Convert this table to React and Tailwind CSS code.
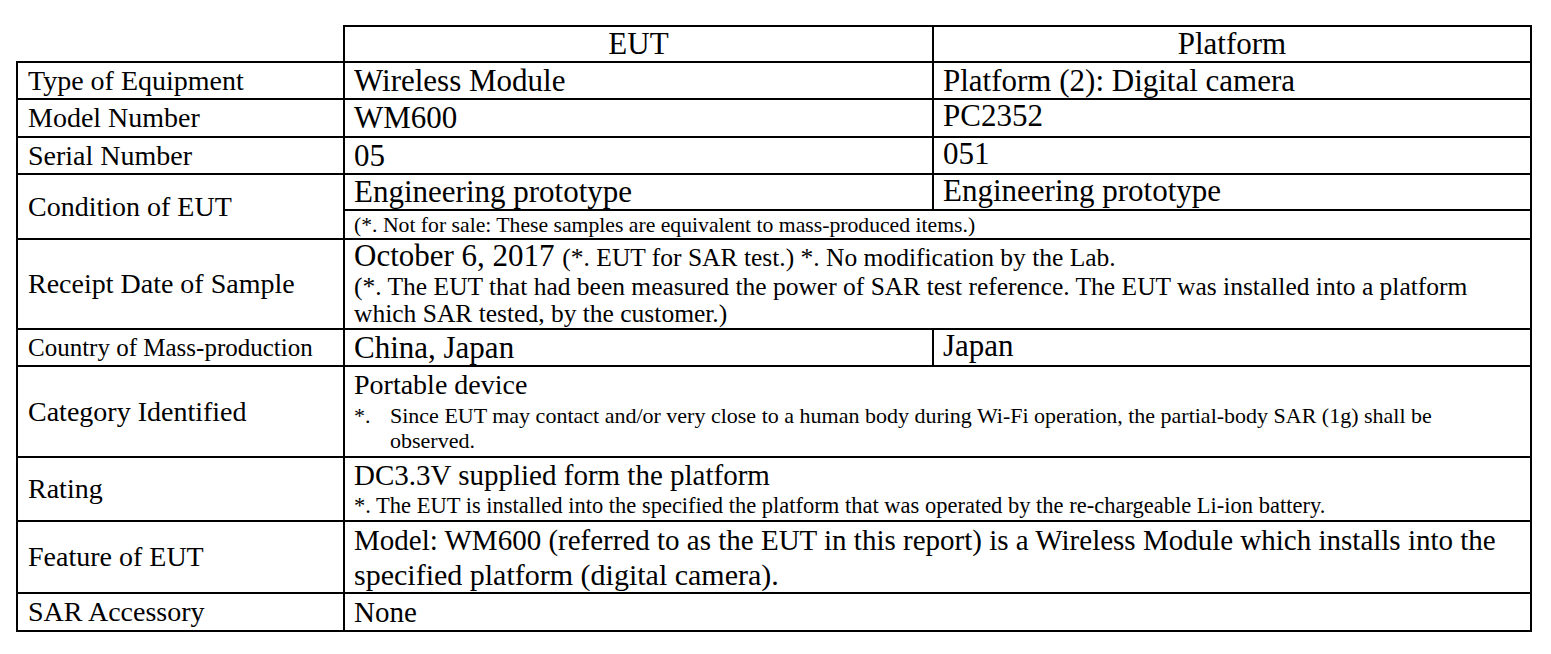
import React from 'react';

const label = 'border-2 border-black pl-[10px] pr-1 align-middle leading-[30px] whitespace-nowrap';
const val = 'border-2 border-black pl-[9px] pr-1 text-[31px] leading-[32px] whitespace-nowrap';
const top = 'border-2 border-black pl-[9px] pr-1 align-top';

const Note = ({ children }) => (
  <div className="flex text-[22px] leading-[25px] whitespace-nowrap">
    <span className="w-[36px] shrink-0">*.</span>
    <span>{children}</span>
  </div>
);

const App = () => {
  return (
    <div className="min-h-screen bg-white text-black font-['Liberation_Serif','Times_New_Roman',serif]">
      <table className="table-fixed border-collapse ml-[16px] mt-[25px] w-[1514px]">
        <colgroup>
          <col className="w-[327px]" />
          <col className="w-[589px]" />
          <col className="w-[598px]" />
        </colgroup>
        <tbody>
          <tr>
            <td className="border-0 h-[36px]"></td>
            <td className="border-2 border-black text-center align-middle text-[31px] leading-[32px]">EUT</td>
            <td className="border-2 border-black text-center align-middle text-[31px] leading-[32px]">Platform</td>
          </tr>
          <tr>
            <td className={`${label} text-[28px] h-[37px]`}>Type of Equipment</td>
            <td className={`${val} align-middle`}>Wireless Module</td>
            <td className={`${val} align-middle`}>Platform (2): Digital camera</td>
          </tr>
          <tr>
            <td className={`${label} text-[28px] h-[38px]`}>Model Number</td>
            <td className={`${val} align-middle`}>WM600</td>
            <td className={`${val} align-top`}>PC2352</td>
          </tr>
          <tr>
            <td className={`${label} text-[28px] h-[37px]`}>Serial Number</td>
            <td className={`${val} align-middle`}>05</td>
            <td className={`${val} align-top`}>051</td>
          </tr>
          <tr>
            <td rowSpan={2} className={`${label} text-[28px]`}>Condition of EUT</td>
            <td className={`${val} align-middle h-[36px]`}>Engineering prototype</td>
            <td className={`${val} align-top`}>Engineering prototype</td>
          </tr>
          <tr>
            <td colSpan={2} className="border-2 border-black pl-[9px] h-[29px] align-middle text-[21.7px] leading-[24px] whitespace-nowrap">
              (*. Not for sale: These samples are equivalent to mass-produced items.)
            </td>
          </tr>
          <tr>
            <td className={`${label} text-[28px] h-[90px]`}>Receipt Date of Sample</td>
            <td colSpan={2} className={`${top} pt-[1px]`}>
              <div className="text-[31px] leading-[30px] whitespace-nowrap">
                October 6, 2017 <span className="text-[25.5px]">(*. EUT for SAR test.) *. No modification by the Lab.</span>
              </div>
              <div className="text-[25.5px] leading-[27px] whitespace-nowrap">
                (*. The EUT that had been measured the power of SAR test reference. The EUT was installed into a platform
                <br />
                which SAR tested, by the customer.)
              </div>
            </td>
          </tr>
          <tr>
            <td className={`${label} text-[25px] h-[37px]`}>Country of Mass-production</td>
            <td className={`${val} align-middle`}>China, Japan</td>
            <td className={`${val} align-top`}>Japan</td>
          </tr>
          <tr>
            <td className={`${label} text-[28px] h-[91px]`}>Category Identified</td>
            <td colSpan={2} className={`${top} pt-[3px]`}>
              <div className="text-[28px] leading-[30px]">Portable device</div>
              <div className="mt-[3px]">
                <Note>
                  Since EUT may contact and/or very close to a human body during Wi-Fi operation, the partial-body SAR (1g) shall be
                  <br />
                  observed.
                </Note>
              </div>
            </td>
          </tr>
          <tr>
            <td className={`${label} text-[28px] h-[64px]`}>Rating</td>
            <td colSpan={2} className={`${top} pt-[2px]`}>
              <div className="text-[29px] leading-[30px] whitespace-nowrap">DC3.3V supplied form the platform</div>
              <div className="mt-[2px] text-[22.5px] leading-[27px] whitespace-nowrap">
                *. The EUT is installed into the specified the platform that was operated by the re-chargeable Li-ion battery.
              </div>
            </td>
          </tr>
          <tr>
            <td className={`${label} text-[28px] h-[72px]`}>Feature of EUT</td>
            <td colSpan={2} className={`${top} whitespace-nowrap`}>
              <div className="text-[29px] leading-[36px]">
                Model: WM600 (referred to as the EUT in this report) is a Wireless Module which installs into the
              </div>
              <div className="text-[30px] leading-[34px]">specified platform (digital camera).</div>
            </td>
          </tr>
          <tr>
            <td className={`${label} text-[28px] h-[38px]`}>SAR Accessory</td>
            <td colSpan={2} className="border-2 border-black pl-[9px] align-middle text-[29px] leading-[32px]">None</td>
          </tr>
        </tbody>
      </table>
    </div>
  );
};

export default App;
